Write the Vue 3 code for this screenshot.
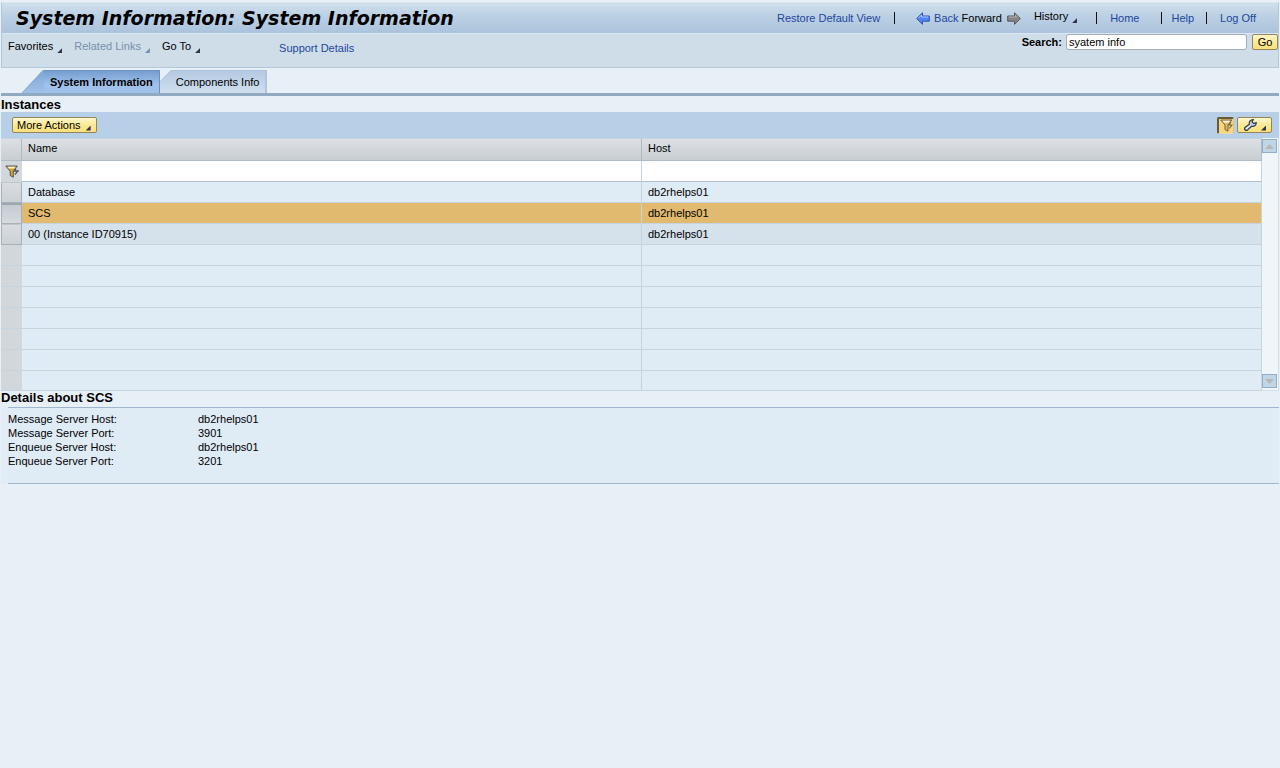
<script setup>
import { ref } from 'vue'

const query = ref('syatem info')
const rows = [
  { name: 'Database', host: 'db2rhelps01' },
  { name: 'SCS', host: 'db2rhelps01', state: 'selected' },
  { name: '00 (Instance ID70915)', host: 'db2rhelps01', state: 'alternate' },
]
const emptyRows = 7
const details = [
  { label: 'Message Server Host:', value: 'db2rhelps01' },
  { label: 'Message Server Port:', value: '3901' },
  { label: 'Enqueue Server Host:', value: 'db2rhelps01' },
  { label: 'Enqueue Server Port:', value: '3201' },
]
</script>

<template>
  <div class="page">
    <header class="header">
      <div class="titlebar">
        <h1>System Information: System Information</h1>
        <nav class="topnav">
          <a href="#restore">Restore Default View</a>
          <span class="sep sep-a"></span>
          <a href="#back" class="back">
            <svg width="14" height="13" viewBox="0 0 14 13">
              <path d="M.7 6.5 6.5.8V4h6.8v5.2H6.5v3.2z" fill="#4f86f7" stroke="#3450a8" />
              <path d="M2.5 6 5.5 3v2h6.8" fill="none" stroke="#a9c8ff" />
            </svg>Back</a>
          <span class="forward">Forward
            <svg width="14" height="13" viewBox="0 0 14 13">
              <path d="M13.3 6.5 7.5.8V4H.7v5.2h6.8v3.2z" fill="#858585" stroke="#55585c" />
              <path d="M1.7 5h6.8V3l2.7 2.7" fill="none" stroke="#b0b0b0" />
            </svg>
          </span>
          <button type="button" class="menu history">History<i class="corner"></i></button>
          <span class="sep sep-b"></span>
          <a href="#home">Home</a>
          <span class="sep sep-c"></span>
          <a href="#help">Help</a>
          <span class="sep sep-d"></span>
          <a href="#logoff">Log Off</a>
        </nav>
      </div>
      <div class="menubar">
        <div class="menus">
          <button type="button" class="menu">Favorites<i class="corner"></i></button>
          <button type="button" class="menu muted" disabled>Related Links<i class="corner"></i></button>
          <button type="button" class="menu">Go To<i class="corner"></i></button>
          <a href="#support" class="support">Support Details</a>
        </div>
        <form class="search" @submit.prevent>
          <label for="search">Search:</label>
          <input id="search" v-model="query" type="text" />
          <button type="submit" class="gold go">Go</button>
        </form>
      </div>
    </header>

    <div class="tabs" role="tablist">
      <button type="button" role="tab" aria-selected="true" class="tab active">
        <svg class="slope" width="22" height="23" viewBox="0 0 22 23">
          <defs>
            <linearGradient id="slopeOn" x1="0" y1="0" x2="0" y2="1">
              <stop offset="0" stop-color="#7ea6d5" /><stop offset="1" stop-color="#9fc1ea" />
            </linearGradient>
          </defs>
          <path d="M0 23 21 0h1v23z" fill="url(#slopeOn)" />
          <path d="M0 23 21 .5h1" fill="none" stroke="#85a6cc" />
        </svg>
        <span>System Information</span>
      </button>
      <button type="button" role="tab" aria-selected="false" class="tab">
        <svg class="slope" width="12" height="23" viewBox="0 0 12 23">
          <defs>
            <linearGradient id="slopeOff" x1="0" y1="0" x2="0" y2="1">
              <stop offset="0" stop-color="#b5c9e2" /><stop offset="1" stop-color="#cfdfee" />
            </linearGradient>
          </defs>
          <path d="M0 12 11 0h1v23H0z" fill="url(#slopeOff)" />
          <path d="M0 12 11 .5h1" fill="none" stroke="#a9bfd8" />
        </svg>
        <span>Components Info</span>
      </button>
    </div>

    <main>
      <h2>Instances</h2>
      <div class="toolbar">
        <button type="button" class="gold more">More Actions<i class="corner"></i></button>
        <div class="tools">
          <button type="button" class="gold filter-on" aria-label="Filter">
            <svg width="13" height="13" viewBox="0 0 13 13">
              <path d="M.8 1h11L8 6v6.2L5 10.5V6z" fill="#e3b650" stroke="#6b6350" />
              <path d="M2.5 1.8h7.6L8.6 3.8H4z" fill="#f8f2e2" />
              <path d="M10.8 3 9.2 6h2.6L9.4 9.5" fill="none" stroke="#76674a" stroke-width="1.2" />
            </svg>
          </button>
          <button type="button" class="gold settings" aria-label="Settings">
            <svg width="13" height="12" viewBox="0 0 13 12">
              <path d="M.9 8.6 5.4 5.2C4.8 2.6 6.4.8 9.2.6L8.1 2.9l1.4 1.5 2.8-.6c-.1 2.8-2.4 4.2-4.7 3.4L3.7 10.9C2 12.2-.2 10.4.9 8.6z" fill="#c3cfdf" stroke="#34394c" stroke-width="1.2" />
              <path d="M2.3 9.6 6.8 6" fill="none" stroke="#f4f8fc" />
            </svg>
            <i class="corner"></i>
          </button>
        </div>
      </div>

      <div class="gridbox">
        <table>
          <colgroup><col class="selcol" /><col /><col /></colgroup>
          <thead>
            <tr class="head"><th></th><th scope="col">Name</th><th scope="col">Host</th></tr>
            <tr class="filter">
              <td>
                <svg width="14" height="13" viewBox="0 0 14 13">
                  <path d="M.8 1h11.5L8.3 6.2v6L5.2 10.5V6.2z" fill="#d1a62c" stroke="#50545c" />
                  <path d="M2.5 1.8h8L9.2 3.4H3.8z" fill="#f7f0d8" />
                  <path d="M11 3.5 9.5 6H13l-3 3.5" fill="none" stroke="#50546a" stroke-width="1.3" />
                </svg>
              </td>
              <td></td><td></td>
            </tr>
          </thead>
          <tbody>
            <tr v-for="row in rows" :key="row.name" :class="row.state">
              <td class="handle"></td><td>{{ row.name }}</td><td>{{ row.host }}</td>
            </tr>
            <tr v-for="n in emptyRows" :key="n" class="empty"><td></td><td></td><td></td></tr>
          </tbody>
        </table>
        <div class="scroll">
          <button type="button" aria-label="Scroll up" disabled>
            <svg width="9" height="5" viewBox="0 0 9 5"><path d="M0 5 4.5 0 9 5z" fill="#b5b8b8" /></svg>
          </button>
          <button type="button" aria-label="Scroll down" disabled>
            <svg width="9" height="5" viewBox="0 0 9 5"><path d="M0 0 4.5 5 9 0z" fill="#b5b8b8" /></svg>
          </button>
        </div>
      </div>

      <h2 class="dtitle">Details about SCS</h2>
      <div class="dwrap">
        <dl>
          <div v-for="d in details" :key="d.label"><dt>{{ d.label }}</dt><dd>{{ d.value }}</dd></div>
        </dl>
      </div>
    </main>
  </div>
</template>

<style>
body { background: #e7eff7; }
</style>

<style scoped>
* { box-sizing: border-box; }
.page {
  min-height: 100vh;
  padding: 2px 1px 0;
  background: #e7eff7;
  color: #000;
  font: 11px/14px "Liberation Sans", Arial, sans-serif;
}
button, input { font: inherit; color: inherit; }
button { margin: 0; padding: 0; border: 0; background: none; }
a { color: #1d46a0; text-decoration: none; }
svg { display: block; flex: none; }

.header { border: 1px solid #b4c8d8; border-top-color: #dce8f2; background: #cfdde8; }
.titlebar {
  display: flex;
  align-items: center;
  justify-content: space-between;
  height: 30px;
  padding: 0 22px 0 14px;
  background: linear-gradient(#d0e0ed, #bdd1e4 40%, #abc3dd);
}
h1 { margin: 0; font: italic bold 19px/28px "DejaVu Sans", Verdana, sans-serif; white-space: nowrap; }
.topnav { display: flex; align-items: center; white-space: nowrap; }
.sep { width: 1px; height: 12px; background: #111; }
.sep-a { margin: 0 21px 0 14px; }
.sep-b { margin: 0 13px 0 19px; }
.sep-c { margin: 0 9px 0 22px; }
.sep-d { margin: 0 13px 0 12px; }
.back, .forward { display: flex; align-items: center; gap: 4px; }
.forward { gap: 5px; margin-left: 3px; }
.menu { display: inline-flex; align-items: flex-end; gap: 4px; line-height: 14px; }
.history { margin: 0 0 4px 13px; }
.corner {
  flex: none;
  width: 5px;
  height: 5px;
  background: #33334a;
  clip-path: polygon(100% 0, 100% 100%, 0 100%);
}
.muted { color: #7890ac; }
.muted .corner { background: #7590b4; }

.menubar {
  display: flex;
  justify-content: space-between;
  height: 34px;
  border-top: 1px solid #dce7f1;
}
.menus { display: flex; align-items: flex-start; gap: 12px; padding: 5px 0 0 6px; }
.support { margin: 2px 0 0 67px; }
.search { display: flex; align-items: flex-start; }
.search label { padding: 1px 4px 0 0; font-weight: bold; }
.search input {
  width: 181px;
  height: 16px;
  margin-right: 5px;
  padding: 0 2px;
  border: 1px solid #a3acb5;
  border-radius: 3px;
  background: #fff;
  outline: 0;
}
.gold {
  display: inline-flex;
  align-items: center;
  height: 16px;
  border: 1px solid #96865c;
  border-radius: 2px;
  background: linear-gradient(#fff6cd, #fce995 50%, #f9df7c);
}
.go { width: 26px; justify-content: center; }

.tabs {
  display: flex;
  height: 28px;
  padding: 2px 0 0 21px;
  border-bottom: 3px double #8299b2;
  border-bottom: 3px solid #91a9c1;
}
.tab { display: flex; height: 23px; white-space: nowrap; }
.tab span {
  height: 23px;
  padding: 0 6px 0 4px;
  border-top: 1px solid #adc2da;
  border-right: 2px solid #b0c4da;
  background: linear-gradient(#b5c9e2, #cfdfee);
  line-height: 22px;
}
.tab.active { font-weight: bold; }
.tab.active span {
  padding: 0 6px;
  border-top-color: #6e93c2;
  border-right: 1px solid #6f8fb8;
  background: linear-gradient(#759dcf, #9fc1ea 60%);
}

h2 { margin: 0; padding-top: 2px; font-size: 13px; line-height: 14px; }
.toolbar {
  display: flex;
  align-items: center;
  justify-content: space-between;
  height: 26px;
  padding: 0 7px 0 11px;
  background: #b8d0e7;
}
.more { gap: 5px; padding: 0 5px 0 4px; }
.more .corner, .settings .corner { position: relative; top: 3px; }
.tools { display: flex; align-items: center; gap: 3px; }
.filter-on {
  width: 17px;
  height: 17px;
  justify-content: center;
  border-width: 2px 1px 1px 2px;
  border-color: #6a5932 #d8c38a #e7d9ae #6a5932;
  background: #f8d67c;
}
.settings { width: 35px; justify-content: space-between; padding: 0 5px 0 6px; }

.gridbox { display: flex; }
table { flex: 1; width: 100%; border-collapse: separate; border-spacing: 0; table-layout: fixed; }
.selcol { width: 21px; }
th, td {
  height: 21px;
  padding: 0 0 0 6px;
  border-right: 1px solid #c6d4e0;
  border-bottom: 1px solid #c6d4e0;
  background: #dfebf5;
  line-height: 14px;
  text-align: left;
  font-weight: normal;
}
.head th {
  height: 23px;
  padding-bottom: 3px;
  border-top: 1px solid #c9d2da;
  border-right-color: #aebac6;
  border-bottom-color: #b1bbc5;
  background: linear-gradient(#dce0e4, #c9ced2);
}
.filter td { background: #fff; border-bottom: 1px solid #b2bfcc; }
tr td:first-child { padding: 0; background: #d2d7dc; border-right-color: #d2d7dc; }
.filter td:first-child { padding-left: 4px; border-bottom-color: #d2d7dc; }
tr td.handle {
  border: 1px solid #a8b0b9;
  border-top-color: #bfc6cd;
  background: linear-gradient(#d9dde1, #ccd1d6);
}
.selected td { background: #e1ba70; }
.selected td.handle { border-top: 2px solid #9ea6b0; background: linear-gradient(#c5cbd2, #d5dade); }
.alternate td { background: #d5e1eb; }
.empty:last-child td { height: 20px; }
.scroll {
  display: flex;
  flex-direction: column;
  justify-content: space-between;
  width: 17px;
  padding: 1px 1px 2px 0;
  border-right: 1px solid #d3dee8;
  border-bottom: 1px solid #d3dee8;
  background: #f0f5f9;
}
.scroll button {
  display: flex;
  align-items: center;
  justify-content: center;
  width: 15px;
  height: 14px;
  border: 1px solid #92adc5;
  background: #c0d6e7;
}

.dtitle { padding: 0 0 2px; }
.dwrap { padding-left: 7px; background: #e1ecf6; }
dl {
  min-height: 77px;
  margin: 0;
  padding-top: 4px;
  border-top: 1px solid #9fb6ce;
  border-bottom: 1px solid #9fb6ce;
  background: #dfebf5;
}
dl div { display: grid; grid-template-columns: 190px 1fr; }
dt, dd { margin: 0; }
</style>
